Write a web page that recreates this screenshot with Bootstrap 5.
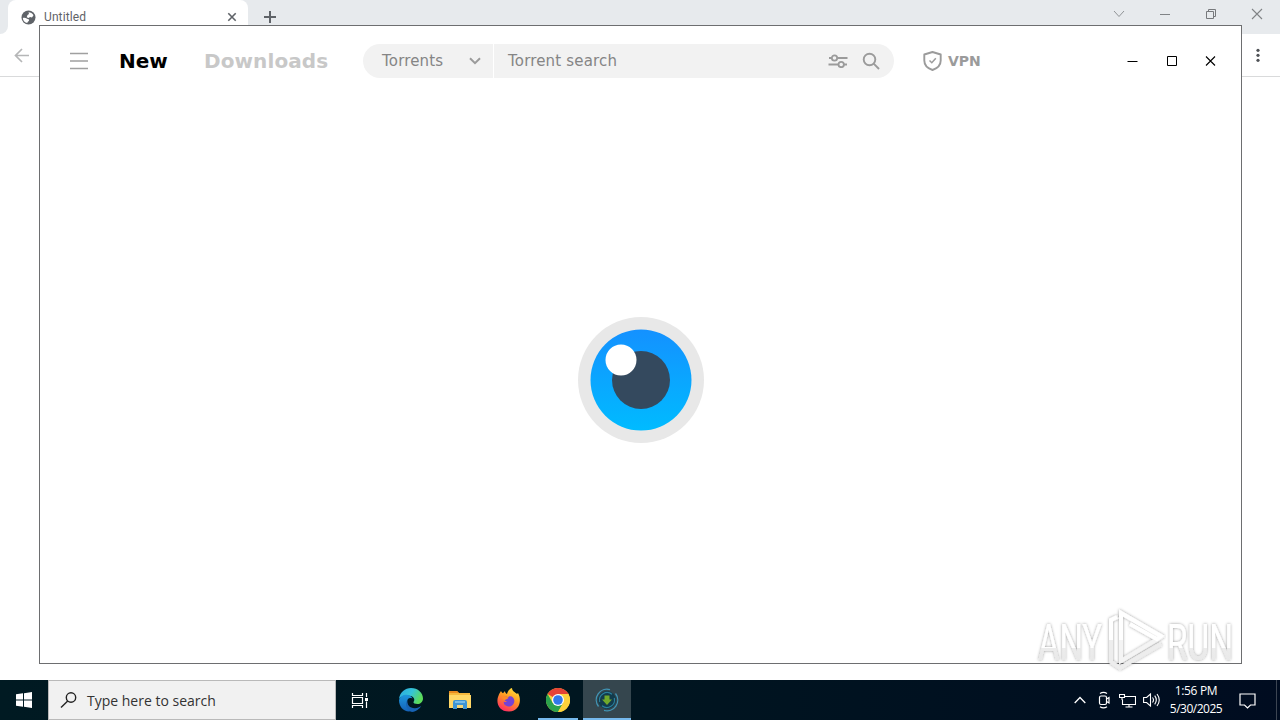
<!DOCTYPE html>
<html lang="en">
<head>
    <meta charset="UTF-8">
    <meta name="viewport" content="width=device-width, initial-scale=1.0">
    <title>Desktop</title>
    <link rel="stylesheet" href="https://cdn.jsdelivr.net/npm/bootstrap@5.3.0/dist/css/bootstrap.min.css">
    <style>
        body { width: 1280px; height: 720px; font-family: "Open Sans", "Noto Sans", sans-serif; background: #fff; }
        svg { display: block; flex: none; }

        /* Browser behind */
        .tab-strip { height: 34px; background: #e7eaed; }
        .strip-edge { width: 8px; background: #fff; }
        .strip-edge div { height: 34px; background: #e7eaed; border-bottom-right-radius: 8px; }
        .browser-tab { width: 240px; background: #fff; border-radius: 8px 8px 0 0; padding-left: 13px; padding-right: 11px; font-size: 12px; color: #5f6368; }
        .tab-title { margin-left: 8px; letter-spacing: .1px; line-height: 34px; font-family: Roboto, "Open Sans", sans-serif; }
        .sys-btn { width: 46px; height: 28px; }
        .toolbar { height: 43px; border-bottom: 1px solid #d9dadb; padding-left: 14px; padding-right: 20px; }

        /* Torrent client window */
        .client { left: 39px; top: 25px; width: 1203px; height: 639px; border: 1px solid #6d6e70; background: #fff; font-family: "DejaVu Sans", sans-serif; }
        .client-head { height: 70px; padding-left: 29px; padding-right: 11px; }
        .head-tab { font-size: 20px; font-weight: 700; line-height: 30px; white-space: nowrap; }
        .tab-new { width: 85px; margin-left: 31px; color: #000; }
        .tab-down { width: 159px; color: #c8c8c8; letter-spacing: .1px; }
        .find-bar { width: 531px; height: 34px; border-radius: 17px; overflow: hidden; color: #858585; font-size: 15px; line-height: 34px; letter-spacing: .17px; gap: 1px; }
        .find-bar > div { background: #f2f2f2; }
        .find-type { width: 130px; padding-left: 19px; padding-right: 12px; }
        .find-text { padding-left: 14px; padding-right: 14px; }
        .vpn { margin-left: 29px; gap: 6px; color: #9b9b9b; font-size: 14px; font-weight: 700; }
        .vpn span { padding-top: 1px; }
        .win-btn { width: 39px; height: 40px; }
        .eye { margin-top: 221px; margin-left: 1px; }
        .brand-mark { left: 1030px; top: 602px; }

        /* Taskbar */
        .taskbar { height: 40px; background: linear-gradient(90deg, #001a22, #001620 45%, #000c20); color: #fff; }
        .start { width: 48px; }
        .task-search { width: 288px; background: #f1f1f1; border: 1px solid #b9b9b9; color: #333; font-size: 14px; padding-left: 11px; }
        .task-search span { margin-left: 9px; font-weight: 400; }
        .task-item { height: 40px; }
        .running { border-bottom: 2px solid #76b9ed; padding-top: 2px; }
        .active-item { background: #35464e; }
        .clock { width: 60px; margin-left: 5px; font-size: 12px; line-height: 18px; letter-spacing: -.35px; text-align: center; white-space: nowrap; }
        .clock-date { letter-spacing: -.5px; }
        .peek { width: 4px; height: 40px; border-left: 1px solid #3c4552; }
    </style>
</head>
<body class="m-0 overflow-hidden position-relative d-flex flex-column">

    <!-- Browser window -->
    <div class="flex-grow-1">
        <div class="tab-strip d-flex">
            <div class="strip-edge"><div></div></div>
            <div class="browser-tab d-flex align-items-center">
                <svg width="15" height="15" viewBox="0 0 15 15"><circle cx="7.500" cy="7.500" r="7" fill="#5f6368"/><path d="M1.800 8c1.500-.7 3-.2 4 .6s2.500.4 2.300 1.600S6.500 11.300 6.300 13C4 12.600 2 10.800 1.800 8zM7.500 2.200c2 0 4 1 5 3l-1.500 2.300-2-.5-1.300 1-2-.8L6.500 5 8 4z" fill="#fff"/></svg>
                <span class="tab-title">Untitled</span>
                <svg class="ms-auto" width="10" height="10" viewBox="0 0 10 10"><path d="M1.300 1.300l7.400 7.400M8.700 1.300L1.300 8.700" stroke="#5f6368" stroke-width="1.600"/></svg>
            </div>
            <svg class="ms-3" width="13" height="34" viewBox="0 0 13 34"><path d="M6 11v12M0 17h12" stroke="#5f6368" stroke-width="2"/></svg>
            <div class="ms-auto d-flex">
                <div class="sys-btn d-flex align-items-center justify-content-center"><svg width="12" height="8" viewBox="0 0 12 8"><path d="M1 1l5 5.500L11 1" fill="none" stroke="#909396"/></svg></div>
                <div class="sys-btn d-flex align-items-center justify-content-center"><svg width="10" height="12" viewBox="0 0 10 12"><path d="M0 6.500h10" stroke="#808386"/></svg></div>
                <div class="sys-btn d-flex align-items-center justify-content-center"><svg width="12" height="12" viewBox="0 0 12 12"><path d="M1.500 3.500h7v7h-7zM3.500 3.500v-2h7v7h-2" fill="none" stroke="#77797c"/></svg></div>
                <div class="sys-btn d-flex align-items-center justify-content-center"><svg width="12" height="12" viewBox="0 0 12 12"><path d="M1 1l10 10M11 1L1 11" stroke="#808386" stroke-width="1.100"/></svg></div>
            </div>
        </div>
        <div class="toolbar d-flex align-items-center justify-content-between">
            <svg width="15" height="15" viewBox="0 0 15 15"><path d="M15 7.500H1.500M8 1L1.500 7.500 8 14" fill="none" stroke="#b5b6b7" stroke-width="1.700"/></svg>
            <svg width="4" height="14" viewBox="0 0 4 14" fill="#4f5256"><circle cx="2" cy="2.300" r="1.600"/><circle cx="2" cy="7.300" r="1.600"/><circle cx="2" cy="12.300" r="1.600"/></svg>
        </div>
    </div>

    <!-- Taskbar -->
    <div class="taskbar d-flex">
        <div class="start d-flex align-items-center justify-content-center">
            <svg width="16" height="16" viewBox="0 0 16 16" fill="#fff"><path d="M0 2.300l7-1v6.200H0zM8 1.200L16 0v7.500H8zM0 8.500h7v6.200l-7-1zM8 8.500h8V16l-8-1.200z"/></svg>
        </div>
        <div class="task-search d-flex align-items-center">
            <svg width="18" height="18" viewBox="0 0 18 18" fill="none" stroke="#222" stroke-width="1.400"><circle cx="11" cy="6.500" r="4.700"/><path d="M7.700 10L1 16.500"/></svg>
            <span>Type here to search</span>
        </div>
        <div class="task-item d-flex align-items-center justify-content-center" style="width:48px">
            <svg width="18" height="17" viewBox="0 0 18 17" fill="none" stroke="#fff" stroke-width="1.200"><path d="M1.500 1v2.500h10V1M1.500 16v-2.500h10V16M1.500 5.500h10v6h-10zM15.500 1v4M15.500 9.500V16"/><path d="M14 6h3v3h-3z" fill="#fff" stroke="none"/></svg>
        </div>
        <div class="task-item d-flex align-items-center justify-content-center" style="width:54px">
            <svg width="24" height="24" viewBox="0 0 24 24">
                <defs>
                    <linearGradient id="edgeTop" x1="0" x2="1" y1="0" y2=".4"><stop offset="0" stop-color="#2aa8e0"/><stop offset=".55" stop-color="#35c4d8"/><stop offset="1" stop-color="#5bdc5a"/></linearGradient>
                    <linearGradient id="edgeLow" x1="0" x2="0" y1="0" y2="1"><stop offset="0" stop-color="#1e96dc"/><stop offset="1" stop-color="#1462b8"/></linearGradient>
                </defs>
                <path d="M0 11C1 4 6 0 12 0c7 0 12 5 12 10.500 0 3.500-2.700 5.500-5.500 5.500-2.500 0-4.500-1-4-2 1.500-1.500 1-5-2.500-6C7 6.500 2 8 0 11z" fill="url(#edgeTop)"/>
                <path d="M0 12c1-4 5-6 9-5 2.500.5 4 2 4.500 3.500C10 9 8 11 8 14c0 4 4 7.500 8 7.500C8 26.500 0 21 0 12z" fill="url(#edgeLow)"/>
                <path d="M8.500 12c-1 5 3 8.500 7.500 8.200 2.500 0 4.500-1.200 6-2.200-1 2.500-4.500 5.500-9 6-5-1.500-8-8-4.500-12z" fill="#1763b4"/>
            </svg>
        </div>
        <div class="task-item d-flex align-items-center justify-content-center" style="width:44px">
            <svg width="22" height="20" viewBox="0 0 22 20"><path d="M0 1h8l2 2h11v15H0z" fill="#f5b83d"/><path d="M0 1h8l2 2H0z" fill="#e98b1f"/><path d="M0 5h22v13H0z" fill="#ffd766"/><path d="M4 19v-7q0-2 2-2h10q2 0 2 2v7h-4v-4H8v4z" fill="#3e95d4"/><path d="M6 11h10v2H6z" fill="#76bce9"/><path d="M8 15h6v3H8z" fill="#f4d77a"/></svg>
        </div>
        <div class="task-item d-flex align-items-center justify-content-center" style="width:54px">
            <svg width="24" height="24" viewBox="0 0 24 24">
                <defs><linearGradient id="fox" x1=".8" y1="0" x2=".3" y2="1"><stop offset="0" stop-color="#ffe33d"/><stop offset=".45" stop-color="#ff9a22"/><stop offset="1" stop-color="#ff2a63"/></linearGradient></defs>
                <path d="M4 3c.5 1 1 1.700 2 2.300L8 3c0 1.500.7 2.300 2 3 .8-2.500 2-5 5-6 0 3 3 4 5 6l1-1c4 7 2 18-9 18.500C2 23.500-1 15 1 9c.5-2 1.500-4 3-6z" fill="url(#fox)"/>
                <path d="M6.500 9.500c2-1.500 4 .3 5.500-1 2.500-1 5 1 5.300 4 .3 4-3.300 6.500-6.300 6-3-.5-4.700-2.500-4.200-5 1 .5 2 1 3 0-1.800-.5-3.300-1.500-3.300-4z" fill="#7542d5"/>
                <path d="M4.500 8C7 7 9 8.500 11.500 9.500 11 11.500 8 11 8 12.500c-1.500 0-3-2-3.500-4.500z" fill="#ff8b28"/>
            </svg>
        </div>
        <div class="task-item running d-flex align-items-center justify-content-center" style="width:40px;margin-left:2px">
            <svg width="24" height="24" viewBox="0 0 24 24"><circle cx="12" cy="12" r="12" fill="#fdd23b"/><path d="M12 12L1.600 6A12 12 0 0 1 22.400 6z" fill="#e54335"/><path d="M1.600 6A12 12 0 0 0 12 24l5.200-9L12 12 6.800 15z" fill="#2ba24c"/><path d="M22.400 6H12L17.200 15 12 24A12 12 0 0 0 22.400 6z" fill="#fdd23b"/><circle cx="12" cy="12" r="6" fill="#fff"/><circle cx="12" cy="12" r="4.800" fill="#3079e8"/></svg>
        </div>
        <div class="task-item running active-item d-flex align-items-center justify-content-center" style="width:48px;margin-left:5px">
            <svg width="24" height="24" viewBox="0 0 24 24" fill="none"><circle cx="12" cy="12" r="9" fill="#123b4c"/><path d="M3.500 18.500A10.700 10.700 0 0 1 15 1.700M20.500 5.500A10.700 10.700 0 0 1 9 22.300" stroke="#4195b5" stroke-width="1.300"/><path d="M4.700 14A7.700 7.700 0 0 1 17 6.200M19.300 10A7.700 7.700 0 0 1 7 17.800" stroke="#2c7f9c" stroke-width="1.200"/><path d="M9.500 7.500h5v4H17l-5 5.500-5-5.500h2.500z" fill="#71a92b"/></svg>
        </div>

        <div class="ms-auto d-flex align-items-center">
            <svg width="12" height="8" viewBox="0 0 12 8"><path d="M.7 7L6 1.500 11.300 7" fill="none" stroke="#fff" stroke-width="1.300"/></svg>
            <svg style="margin-left:11px" width="14" height="18" viewBox="0 0 14 18" fill="none" stroke="#fff" stroke-width="1.200"><rect x="2.500" y="5" width="7" height="8.500" rx="1.500"/><path d="M9.500 8l2.500-1.500v5.500L9.500 10.500M3 2.500Q6.500.2 10 2.500M3 15.800q3.500 2.300 7 0"/></svg>
            <svg style="margin-left:8px" width="17" height="15" viewBox="0 0 17 15" fill="none" stroke="#fff" stroke-width="1.100"><path d="M6 3.500h10.500v8H3.500V6.500M10 11.500v2.500M6.500 14h7M.5 1.500h5v3h-5zM3 4.500V7"/></svg>
            <svg style="margin-left:7px" width="18" height="16" viewBox="0 0 18 16" fill="none" stroke="#fff" stroke-width="1.100"><path d="M.6 5.500h3L7.500 2v12L3.600 10.500h-3zM9.500 5.500q2 2.500 0 5M11.700 3.700q3.200 4.300 0 8.600M14 2q4.500 6 0 12"/></svg>
            <div class="clock">1:56 PM<br><span class="clock-date">5/30/2025</span></div>
            <svg style="margin-left:13px;margin-right:20px" width="17" height="17" viewBox="0 0 17 17"><path d="M1 2h15v11h-4.500l-3 3-3-3H1z" fill="none" stroke="#fff" stroke-width="1.200"/></svg>
            <div class="peek"></div>
        </div>
    </div>

    <!-- Torrent client window -->
    <div class="client position-absolute">
        <div class="client-head d-flex align-items-center">
            <svg width="19" height="18" viewBox="0 0 19 18"><path d="M1 1.500h18M1 9h18M1 16.500h18" stroke="#a0a0a0" stroke-width="1.600"/></svg>
            <div class="head-tab tab-new">New</div>
            <div class="head-tab tab-down">Downloads</div>
            <div class="find-bar d-flex">
                <div class="find-type d-flex align-items-center justify-content-between">Torrents
                    <svg width="12" height="8" viewBox="0 0 12 8"><path d="M1 1.200l5 5 5-5" fill="none" stroke="#9b9b9b" stroke-width="2"/></svg>
                </div>
                <div class="find-text flex-grow-1 d-flex align-items-center">Torrent search
                    <svg class="ms-auto" width="20" height="14" viewBox="0 0 20 14" fill="none" stroke="#9b9b9b" stroke-width="1.800"><path d="M1 4h2.500M9.500 4H19.500M.5 10.500h9.500M16 10.500h3"/><circle cx="6.500" cy="4" r="2.700"/><circle cx="13.200" cy="10.500" r="2.700"/></svg>
                    <svg style="margin-left:14px" width="18" height="18" viewBox="0 0 18 18" fill="none" stroke="#9b9b9b" stroke-width="1.900"><circle cx="7.500" cy="7.500" r="5.800"/><path d="M11.700 11.700L17 17"/></svg>
                </div>
            </div>
            <div class="vpn d-flex align-items-center">
                <svg width="19" height="20" viewBox="0 0 19 20" fill="none" stroke="#9b9b9b"><path d="M9.500 1L17.700 3.500V9.500C17.700 14 14 17.500 9.500 19 5 17.500 1.300 14 1.300 9.500V3.500z" stroke-width="1.900" stroke-linejoin="round"/><path d="M6.500 9.500l2.300 2.200 4-4.500" stroke-width="1.500"/></svg>
                <span>VPN</span>
            </div>
            <div class="ms-auto d-flex">
                <div class="win-btn d-flex align-items-center justify-content-center"><svg width="11" height="12" viewBox="0 0 11 12"><path d="M.5 6.500h10" stroke="#000"/></svg></div>
                <div class="win-btn d-flex align-items-center justify-content-center"><svg width="11" height="12" viewBox="0 0 11 12"><path d="M1.500 1.500h9v9h-9z" fill="none" stroke="#000"/></svg></div>
                <div class="win-btn d-flex align-items-center justify-content-center"><svg width="11" height="12" viewBox="0 0 11 12"><path d="M1 1.500l9 9M10 1.500l-9 9" stroke="#000" stroke-width="1.100"/></svg></div>
            </div>
        </div>
        <div class="eye d-flex justify-content-center">
            <svg width="126" height="126" viewBox="0 0 126 126">
                <defs><linearGradient id="iris" x1="0" x2="0" y1="0" y2="1"><stop offset="0" stop-color="#1491ff"/><stop offset="1" stop-color="#00bbff"/></linearGradient></defs>
                <circle cx="63" cy="63" r="63" fill="#e8e8e8"/>
                <circle cx="63" cy="63" r="50.500" fill="url(#iris)"/>
                <circle cx="63" cy="63" r="29" fill="#34495e"/>
                <circle cx="43" cy="43" r="15.500" fill="#fff"/>
            </svg>
        </div>
    </div>

    <!-- Watermark over the desktop -->
    <svg class="brand-mark position-absolute" width="240" height="74" viewBox="0 0 240 74">
        <defs>
            <linearGradient id="wmFill" x1="0" x2="0" y1="0" y2="1"><stop offset="0" stop-color="#fff"/><stop offset=".58" stop-color="#fff"/><stop offset=".59" stop-color="#ececec"/><stop offset="1" stop-color="#e6e6e6"/></linearGradient>
            <filter id="wmShade" x="-10%" y="-10%" width="120%" height="120%"><feDropShadow dx="0" dy="0" stdDeviation="1.500" flood-color="#000" flood-opacity=".4"/></filter>
        </defs>
        <g filter="url(#wmShade)" fill="url(#wmFill)" font-family="Roboto, sans-serif" font-size="50">
            <text x="8" y="58" textLength="64" lengthAdjust="spacingAndGlyphs">ANY</text>
            <text x="137" y="58" textLength="66" lengthAdjust="spacingAndGlyphs">RUN</text>
        </g>
        <g filter="url(#wmShade)" fill="none" stroke="#fff" stroke-width="4">
            <path d="M88 15l-7 3v42l9 6L131 42" stroke="#ededed"/>
            <path d="M91 11v48l40-24z" stroke="#f4f4f4"/>
            <path d="M81 38V18l6-3M91 38V11l40 23-4 3-27-15"/>
        </g>
    </svg>

    <script src="https://cdn.jsdelivr.net/npm/bootstrap@5.3.0/dist/js/bootstrap.bundle.min.js"></script>
</body>
</html>
